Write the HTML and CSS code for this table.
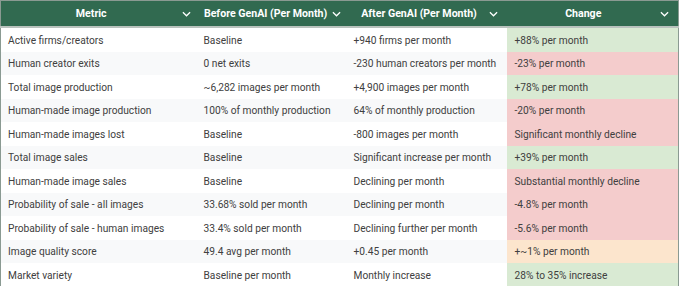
FILE: index.html
```html
<!DOCTYPE html>
<html lang="en">
<head>
  <meta charset="UTF-8" />
  <title>GenAI Impact Table</title>
  <link rel="stylesheet" href="styles.css">
</head>
<body>
  <table class="impact">
    <colgroup>
      <col class="c-metric">
      <col class="c-before">
      <col class="c-after">
      <col class="c-change">
    </colgroup>
    <thead>
      <tr>
        <th><div class="th-in"><span>Metric</span><svg class="chev" viewBox="0 0 10 6"><path d="M1 1l4 4 4-4"/></svg></div></th>
        <th><div class="th-in"><span>Before GenAI (Per Month)</span><svg class="chev" viewBox="0 0 10 6"><path d="M1 1l4 4 4-4"/></svg></div></th>
        <th><div class="th-in"><span>After GenAI (Per Month)</span><svg class="chev" viewBox="0 0 10 6"><path d="M1 1l4 4 4-4"/></svg></div></th>
        <th><div class="th-in"><span>Change</span><svg class="chev" viewBox="0 0 10 6"><path d="M1 1l4 4 4-4"/></svg></div></th>
      </tr>
    </thead>
    <tbody>
      <tr><td>Active firms/creators</td><td>Baseline</td><td>+940 firms per month</td><td class="up">+88% per month</td></tr>
      <tr><td>Human creator exits</td><td>0 net exits</td><td>-230 human creators per month</td><td class="down">-23% per month</td></tr>
      <tr><td>Total image production</td><td>~6,282 images per month</td><td>+4,900 images per month</td><td class="up">+78% per month</td></tr>
      <tr><td>Human-made image production</td><td>100% of monthly production</td><td>64% of monthly production</td><td class="down">-20% per month</td></tr>
      <tr><td>Human-made images lost</td><td>Baseline</td><td>-800 images per month</td><td class="down">Significant monthly decline</td></tr>
      <tr><td>Total image sales</td><td>Baseline</td><td>Significant increase per month</td><td class="up">+39% per month</td></tr>
      <tr><td>Human-made image sales</td><td>Baseline</td><td>Declining per month</td><td class="down">Substantial monthly decline</td></tr>
      <tr><td>Probability of sale - all images</td><td>33.68% sold per month</td><td>Declining per month</td><td class="down">-4.8% per month</td></tr>
      <tr><td>Probability of sale - human images</td><td>33.4% sold per month</td><td>Declining further per month</td><td class="down">-5.6% per month</td></tr>
      <tr><td>Image quality score</td><td>49.4 avg per month</td><td>+0.45 per month</td><td class="mid">+~1% per month</td></tr>
      <tr><td>Market variety</td><td>Baseline per month</td><td>Monthly increase</td><td class="up">28% to 35% increase</td></tr>
    </tbody>
  </table>
</body>
</html>
```

FILE: styles.css
```css
:root {
  --header: #316a50;
  --border: #8a9a92;
  --text: #404040;
  --stripe: #f8f9fa;
  --green: #d9ead3;
  --red: #f4cccc;
  --orange: #fce5cd;
}

body {
  margin: 0;
  background: #fff;
  font-family: Roboto, "Noto Sans", sans-serif;
  color: var(--text);
}

.impact {
  width: 678px;
  border-collapse: collapse;
  table-layout: fixed;
  border: 1px solid var(--border);
  font-size: 10.2px;
}

.c-metric { width: 199px; }
.c-before { width: 150px; }
.c-after { width: 157px; }
.c-change { width: 172px; }

.impact th {
  background: var(--header);
  color: #fff;
  height: 25px;
  padding: 0;
  font-weight: 700;
  font-size: 10.6px;
  white-space: nowrap;
  border-bottom: 2px solid #b9c2bd;
}

.th-in {
  display: flex;
  align-items: center;
  padding-right: 9px;
}

.th-in span {
  flex: 1;
  text-align: center;
}

.chev {
  width: 9px;
  height: 6px;
  fill: none;
  stroke: #fff;
  stroke-width: 1.4;
}

.impact td {
  height: 22.5px;
  padding: 1px 0 0 7px;
  white-space: nowrap;
  overflow: hidden;
}

.impact td:nth-child(2),
.impact td:nth-child(3) {
  padding-left: 4px;
}

.impact td:nth-child(4) {
  padding-left: 8px;
}

.impact tbody tr:nth-child(even) td {
  background: var(--stripe);
}

.impact tbody tr td.up { background: var(--green); }
.impact tbody tr td.down { background: var(--red); }
.impact tbody tr td.mid { background: var(--orange); }
```
